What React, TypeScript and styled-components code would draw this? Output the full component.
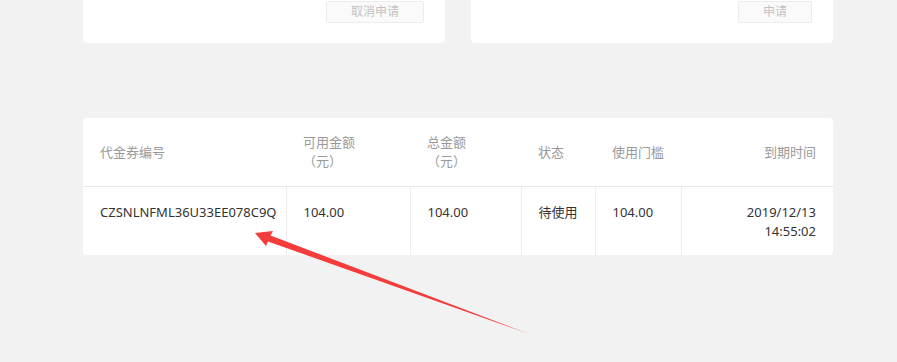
import React from 'react'
import styled, { createGlobalStyle } from 'styled-components'

const GlobalStyle = createGlobalStyle`
  html, body {
    margin: 0;
    padding: 0;
    background: #f2f2f2;
  }
  body {
    font-family: "Noto Sans", "Noto Sans CJK SC", sans-serif;
    font-size: 13px;
    color: #333;
  }
`

const Screen = styled.div`
  position: relative;
  width: 897px;
  height: 362px;
  overflow: hidden;
`

const Page = styled.div`
  width: 750px;
  margin-left: 83px;
  margin-top: -97px;
  display: flex;
  flex-direction: column;
  gap: 75px;
`

const CardRow = styled.div`
  display: flex;
  gap: 26px;
`

const ApplyCard = styled.div`
  flex: 0 0 362px;
  height: 140px;
  box-sizing: border-box;
  background: #fff;
  border-radius: 4px;
  padding: 0 21px 20px;
  display: flex;
  align-items: flex-end;
  justify-content: flex-end;
`

const GhostButton = styled.button`
  height: 22px;
  box-sizing: border-box;
  padding: 0 24px;
  border: 1px solid #ececec;
  border-radius: 2px;
  background: #fafafa;
  color: #c2c2c2;
  font-family: inherit;
  font-size: 12px;
  line-height: 20px;
  cursor: not-allowed;
`

const TableCard = styled.div`
  background: #fff;
  border-radius: 4px;
  overflow: hidden;
`

const Table = styled.table`
  width: 750px;
  table-layout: fixed;
  border-collapse: collapse;
`

const HeadCell = styled.th<{ $align?: 'left' | 'right' }>`
  height: 68px;
  padding: 0 17px;
  font-weight: normal;
  color: #999;
  line-height: 19px;
  text-align: ${p => p.$align ?? 'left'};
  vertical-align: middle;
  border-bottom: 1px solid #e8e8e8;
`

// unit sits on its own line under the column title
const Unit = styled.span`
  display: block;
`

const BodyCell = styled.td<{ $align?: 'left' | 'right' }>`
  height: 68px;
  box-sizing: border-box;
  padding: 16px 17px 0;
  line-height: 19px;
  color: #333;
  text-align: ${p => p.$align ?? 'left'};
  vertical-align: top;
  border-left: 1px solid #eeeeee;
  &:first-child {
    border-left: none;
  }
`

const Arrow = styled.svg`
  position: absolute;
  left: 0;
  top: 0;
  pointer-events: none;
`

type Column = { title: string; unit?: string; width: number; align?: 'left' | 'right' }

const columns: Column[] = [
  { title: '代金券编号', width: 203 },
  { title: '可用金额', unit: '（元）', width: 124 },
  { title: '总金额', unit: '（元）', width: 111 },
  { title: '状态', width: 74 },
  { title: '使用门槛', width: 86 },
  { title: '到期时间', width: 152, align: 'right' },
]

const voucher = {
  code: 'CZSNLNFML36U33EE078C9Q',
  available: '104.00',
  total: '104.00',
  status: '待使用',
  threshold: '104.00',
  expireDate: '2019/12/13',
  expireTime: '14:55:02',
}

const App: React.FC = () => {
  return (
    <Screen>
      <GlobalStyle />
      <Page>
        <CardRow>
          <ApplyCard>
            <GhostButton>取消申请</GhostButton>
          </ApplyCard>
          <ApplyCard>
            <GhostButton>申请</GhostButton>
          </ApplyCard>
        </CardRow>
        <TableCard>
          <Table>
            <colgroup>
              {columns.map(c => (
                <col key={c.title} style={{ width: c.width }} />
              ))}
            </colgroup>
            <thead>
              <tr>
                {columns.map(c => (
                  <HeadCell key={c.title} $align={c.align}>
                    {c.title}
                    {c.unit && <Unit>{c.unit}</Unit>}
                  </HeadCell>
                ))}
              </tr>
            </thead>
            <tbody>
              <tr>
                <BodyCell>{voucher.code}</BodyCell>
                <BodyCell>{voucher.available}</BodyCell>
                <BodyCell>{voucher.total}</BodyCell>
                <BodyCell>{voucher.status}</BodyCell>
                <BodyCell>{voucher.threshold}</BodyCell>
                <BodyCell $align="right">
                  {voucher.expireDate}
                  <br />
                  {voucher.expireTime}
                </BodyCell>
              </tr>
            </tbody>
          </Table>
        </TableCard>
      </Page>
      <Arrow width="897" height="362" viewBox="0 0 897 362">
        <polygon
          points="255,233 273,231 270.5,235.5 528,333.5 268,241.5 266,246"
          fill="#f43c3c"
        />
      </Arrow>
    </Screen>
  )
}

export default App
